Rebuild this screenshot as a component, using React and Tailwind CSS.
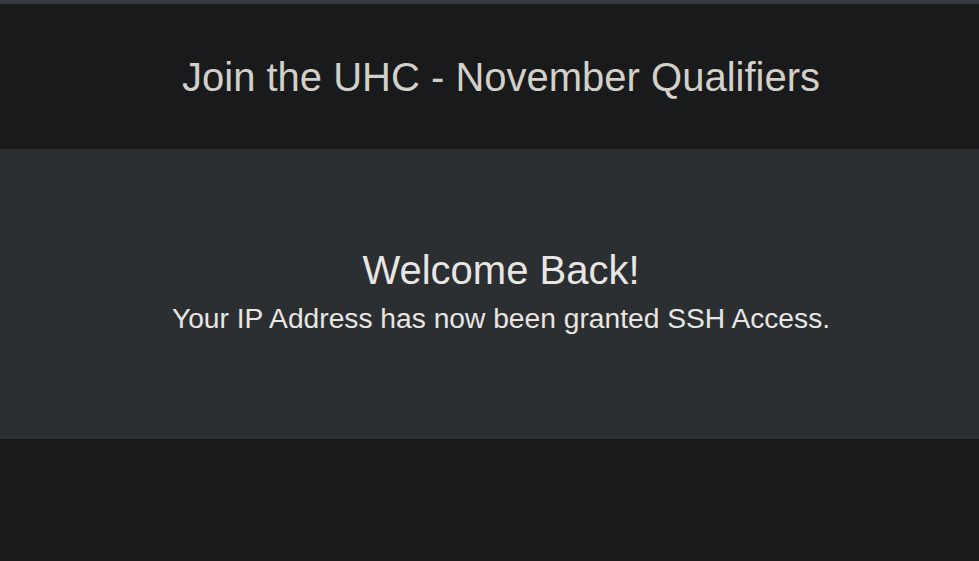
export default function App() {
  return (
    <div className="min-h-[561px] flex flex-col bg-[#181a1b]" style={{ fontFamily: '"Liberation Sans", Arial, sans-serif' }}>
      {/* top strip */}
      <div className="h-[4px] bg-[#353a41]" />

      {/* header */}
      <div className="h-[145px] pl-[23px] flex items-center justify-center">
        <h1 className="text-[40px] leading-[1.2] font-normal text-[#d3cfc9]">Join the UHC - November Qualifiers</h1>
      </div>

      {/* jumbotron */}
      <div className="h-[290px] pl-[23px] pb-[2px] bg-[#2b2f32] flex flex-col items-center justify-center">
        <h2 className="text-[40px] leading-[1.2] font-normal text-[#e8e6e3]">Welcome Back!</h2>
        <p className="mt-[3px] text-[28.2px] leading-[1.5] text-[#e8e6e3]">Your IP Address has now been granted SSH Access.</p>
      </div>

      <div className="flex-1" />
    </div>
  );
}
